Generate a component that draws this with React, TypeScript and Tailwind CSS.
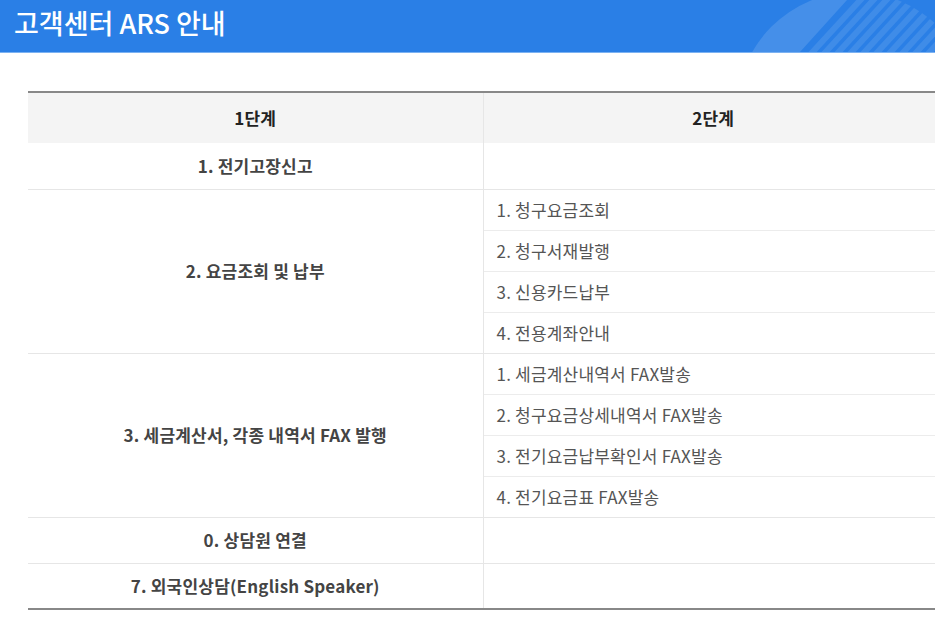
import React from 'react'

const font = { fontFamily: '"Noto Sans CJK KR", "Noto Sans", sans-serif' }

type Group = { title: string; items: string[] }

const groups: Group[] = [
  { title: '1. 전기고장신고', items: [] },
  { title: '2. 요금조회 및 납부', items: ['1. 청구요금조회', '2. 청구서재발행', '3. 신용카드납부', '4. 전용계좌안내'] },
  {
    title: '3. 세금계산서, 각종 내역서 FAX 발행',
    items: ['1. 세금계산내역서 FAX발송', '2. 청구요금상세내역서 FAX발송', '3. 전기요금납부확인서 FAX발송', '4. 전기요금표 FAX발송'],
  },
  { title: '0. 상담원 연결', items: [] },
  { title: '7. 외국인상담(English Speaker)', items: [] },
]

const stripes = [0, 1, 2, 3, 4, 5, 6, 7, 8, 9]

function HeaderDeco() {
  return (
    <svg className="absolute right-0 top-0 pointer-events-none" width="200" height="52" viewBox="0 0 200 52">
      <defs>
        <clipPath id="deco-circle">
          <circle cx="120" cy="110" r="118" />
        </clipPath>
      </defs>
      <g clipPath="url(#deco-circle)">
        <polygon points="-10,0 112,0 65,52 -10,52" fill="#ffffff" fillOpacity="0.13" />
        <g stroke="#ffffff" strokeOpacity="0.1" strokeWidth="6">
          {stripes.map((k) => {
            const x0 = 78 + k * 13
            return <line key={k} x1={x0 - 5} y1={57} x2={x0 + 52} y2={-5} />
          })}
        </g>
      </g>
    </svg>
  )
}

export default function App() {
  return (
    <div className="w-[935px] h-[620px] bg-white overflow-hidden" style={font}>
      <header className="relative h-[53px] bg-[#2a7fe6] border-b border-[#7cb2f2] overflow-hidden">
        <h1 className="pl-[14px] pt-[3px] text-[27px] leading-[40px] font-medium text-white">
          고객센터 ARS 안내
        </h1>
        <HeaderDeco />
      </header>

      <div className="pl-[28px] pt-[38px]">
        <table className="w-[915px] border-collapse border-t-2 border-b-2 border-[#888] table-fixed tracking-[0.2px]">
          <colgroup>
            <col className="w-[455px]" />
            <col />
          </colgroup>
          <thead>
            <tr className="bg-[#f4f4f4] h-[51px]">
              <th className="text-[17px] font-bold text-[#222] border-r border-[#e6e6e6]">1단계</th>
              <th className="text-[17px] font-bold text-[#222]">2단계</th>
            </tr>
          </thead>
          <tbody>
            {groups.map((g) => {
              if (g.items.length === 0) {
                return (
                  <tr key={g.title} className="h-[46px] border-b border-[#e6e6e6]">
                    <td className="text-center text-[17px] font-bold text-[#444] border-r border-[#e6e6e6]">{g.title}</td>
                    <td />
                  </tr>
                )
              }
              return g.items.map((it, i) => (
                <tr
                  key={it}
                  className={`h-[41px] border-b ${i === g.items.length - 1 ? 'border-[#e6e6e6]' : 'border-[#ececec]'}`}
                >
                  {i === 0 && (
                    <td
                      rowSpan={g.items.length}
                      className="text-center text-[17px] font-bold text-[#444] border-r border-[#e6e6e6]"
                    >
                      {g.title}
                    </td>
                  )}
                  <td className="pl-[13px] text-[17px] text-[#555]">{it}</td>
                </tr>
              ))
            })}
          </tbody>
        </table>
      </div>
    </div>
  )
}
